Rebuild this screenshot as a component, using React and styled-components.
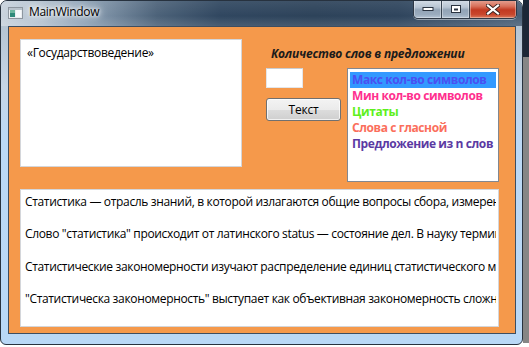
import React from "react";
import styled, { createGlobalStyle } from "styled-components";

const Global = createGlobalStyle`
  html, body { margin: 0; padding: 0; }
  body { background: #ffffff; font-family: "Open Sans", "Noto Sans", sans-serif; }
`;

const Desktop = styled.div`
  width: 529px;
  height: 347px;
  display: flex;
  align-items: flex-start;
  background:
    linear-gradient(to right, transparent 0 523px, #1c2737 523px) top / 100% 57px no-repeat,
    linear-gradient(to right, transparent 0 523px, #868686 523px) 0 57px / 100% 286px no-repeat,
    #ffffff;
`;

const Window = styled.div`
  box-sizing: border-box;
  width: 523px;
  height: 345px;
  border: 1px solid #27323f;
  border-radius: 7px 7px 6px 6px;
  overflow: hidden;
  display: flex;
  flex-direction: column;
  background: linear-gradient(
    to bottom,
    #aebdcb 0,
    #c6d6e6 25%,
    #bcd9f5 40%,
    #b9d8f6 100%
  );
`;

const TitleBar = styled.div`
  height: 25px;
  flex: none;
  display: flex;
  align-items: flex-start;
  padding: 0 5px 0 7px;
  background:
    linear-gradient(to bottom, rgba(255,255,255,0.08), rgba(255,255,255,0) 60%, rgba(255,255,255,0.12)),
    linear-gradient(
      to right,
      #c9d3dd 0,
      #b3c1cf 8%,
      #8ea2b6 16%,
      #4c6279 30%,
      #304760 42%,
      #2d435a 60%,
      #2f455d 76%,
      #4a6078 100%
    );
`;

const AppIcon = styled.svg`
  flex: none;
  margin-top: 6px;
`;

const Title = styled.div`
  margin-left: 6px;
  margin-top: 3px;
  font-family: "Open Sans", "Noto Sans", sans-serif;
  font-size: 12px;
  line-height: 16px;
  letter-spacing: -0.3px;
  color: #000;
  text-shadow: 0 0 6px #fff, 0 0 10px #fff, 0 0 3px #fff;
  flex: 1;
`;

const CaptionGroup = styled.div`
  display: flex;
  margin-top: -1px;
  height: 18px;
  border: 1px solid #2e3845;
  border-top: none;
  border-radius: 0 0 5px 5px;
  overflow: hidden;
  box-shadow: 0 1px 0 rgba(255,255,255,0.45);
`;

const CaptionButton = styled.div`
  width: ${(p) => p.$w}px;
  height: 100%;
  display: flex;
  align-items: center;
  justify-content: center;
  box-shadow: inset 0 0 0 1px rgba(255,255,255,0.35);
  border-left: ${(p) => (p.$first ? "none" : "1px solid #3a4654")};
  background: ${(p) =>
    p.$close
      ? "linear-gradient(to bottom, #e6a596 0, #d8705a 35%, #c23a22 55%, #c8462c 80%, #da7a5c 100%)"
      : "linear-gradient(to bottom, #d6dee8 0, #b8c5d3 40%, #93a4b7 55%, #9aabbd 80%, #b5c4d4 100%)"};
`;

const FrameBody = styled.div`
  flex: 1;
  display: flex;
  padding: 0 6px 10px 7px;
  min-height: 0;
  min-width: 0;
`;

const Client = styled.div`
  flex: 1;
  min-width: 0;
  overflow: hidden;
  border: 1px solid #3d4e61;
  background: #f5994b;
  display: flex;
  flex-direction: column;
  gap: 7px;
  padding: 12px 16px 6px 11px;
  font-family: "Open Sans", "Noto Sans", sans-serif;
`;

const TopArea = styled.div`
  display: flex;
  align-items: flex-start;
`;

const NoteBox = styled.div`
  box-sizing: border-box;
  width: 222px;
  height: 128px;
  background: #fff;
  border: 1px solid #d4d6da;
  padding: 5px 6px;
  font-size: 12px;
  line-height: 16px;
  letter-spacing: -0.3px;
  color: #000;
`;

const RightPanel = styled.div`
  margin-left: 24px;
  display: flex;
  flex-direction: column;
`;

const Caption = styled.div`
  height: 29px;
  padding-left: 5px;
  display: flex;
  align-items: center;
  font-size: 12px;
  font-weight: 700;
  font-style: italic;
  letter-spacing: -0.2px;
  color: #1b1b1b;
  white-space: nowrap;
`;

const ControlsRow = styled.div`
  display: flex;
  gap: 6px;
  align-items: flex-start;
`;

const ControlsColumn = styled.div`
  display: flex;
  flex-direction: column;
  align-items: flex-start;
  gap: 10px;
  width: 75px;
`;

const SmallInput = styled.div`
  box-sizing: border-box;
  width: 37px;
  height: 20px;
  background: #fff;
  border: 1px solid #e3e6ea;
  border-top-color: #c9cdd2;
`;

const Button = styled.div`
  box-sizing: border-box;
  width: 75px;
  height: 23px;
  border: 1px solid #707070;
  border-radius: 3px;
  background: linear-gradient(to bottom, #f3f3f3 0, #ebebeb 50%, #dddddd 50%, #cfcfcf 100%);
  box-shadow: inset 0 0 0 1px rgba(255,255,255,0.7);
  display: flex;
  align-items: center;
  justify-content: center;
  font-size: 12px;
  letter-spacing: -0.2px;
  color: #000;
`;

const ListBox = styled.div`
  box-sizing: border-box;
  width: 152px;
  height: 114px;
  background: #fff;
  border: 1px solid #828790;
  padding: 3px 2px;
  display: flex;
  flex-direction: column;
`;

const ListItem = styled.div`
  height: 16px;
  line-height: 16px;
  padding-left: 2px;
  font-size: 12px;
  font-weight: 700;
  letter-spacing: -0.4px;
  white-space: nowrap;
  overflow: hidden;
  color: ${(p) => p.$color};
  background: ${(p) => (p.$selected ? "#3399ff" : "transparent")};
`;

const TextArea = styled.div`
  box-sizing: border-box;
  height: 138px;
  min-width: 0;
  background: #fff;
  border: 1px solid #d4d6da;
  padding: 4px 0 4px 4px;
  overflow: hidden;
  font-size: 12px;
  line-height: 16.2px;
  letter-spacing: -0.34px;
  color: #000;
`;

const TextViewport = styled.div`
  margin-right: 2px;
  overflow: hidden;
`;

const Paragraph = styled.p`
  margin: 0 0 16.2px 0;
  white-space: nowrap;
`;

const items = [
  { text: "Макс кол-во символов", color: "#4a50f2", selected: true },
  { text: "Мин кол-во символов", color: "#ff2f8e" },
  { text: "Цитаты", color: "#5ef01c" },
  { text: "Слова с гласной", color: "#fb6f5c" },
  { text: "Предложение из n слов", color: "#5b3aa3" },
];

const paragraphs = [
  "Статистика — отрасль знаний, в которой излагаются общие вопросы сбора, измерения и анализа массовых статистических данных.",
  "Слово \"статистика\" происходит от латинского status — состояние дел. В науку термин \"статистика\" ввёл немецкий учёный Готфрид Ахенвалль.",
  "Статистические закономерности изучают распределение единиц статистического множества по отдельным признакам.",
  "\"Статистическа закономерность\" выступает как объективная закономерность сложного массового процесса.",
];

export default function App() {
  return (
    <>
      <Global />
      <Desktop>
        <Window>
          <TitleBar>
            <AppIcon width="15" height="12" viewBox="0 0 15 12">
              <rect x="0.5" y="0.5" width="14" height="11" fill="#e9edf1" stroke="#8d969f" />
              <rect x="1" y="1" width="13" height="2" fill="#b9c3cc" />
              <rect x="2" y="3" width="5" height="7" fill="#2f8a7a" />
              <rect x="2" y="3" width="5" height="3" fill="#6fb7a0" />
              <rect x="8" y="3" width="5" height="7" fill="#f7f9fb" />
            </AppIcon>
            <Title>MainWindow</Title>
            <CaptionGroup>
              <CaptionButton $w={27} $first>
                <svg width="12" height="6" viewBox="0 0 12 6">
                  <rect x="1" y="1.5" width="10" height="3" fill="#fff" stroke="#2a3340" strokeWidth="1" />
                </svg>
              </CaptionButton>
              <CaptionButton $w={27}>
                <svg width="12" height="10" viewBox="0 0 12 10">
                  <rect x="1" y="1" width="10" height="8" fill="#2a3340" />
                  <rect x="2" y="2" width="8" height="6" fill="#fff" />
                  <rect x="4" y="4.5" width="4" height="2" fill="#2a3340" />
                </svg>
              </CaptionButton>
              <CaptionButton $w={46} $close>
                <svg width="14" height="11" viewBox="0 0 14 11">
                  <path d="M2 1.5 L12 9.5 M12 1.5 L2 9.5" stroke="#3a2320" strokeWidth="4" strokeLinecap="square" />
                  <path d="M2 1.5 L12 9.5 M12 1.5 L2 9.5" stroke="#ffffff" strokeWidth="2.2" strokeLinecap="square" />
                </svg>
              </CaptionButton>
            </CaptionGroup>
          </TitleBar>
          <FrameBody>
            <Client>
              <TopArea>
                <NoteBox>«Государствоведение»</NoteBox>
                <RightPanel>
                  <Caption>Количество слов в предложении</Caption>
                  <ControlsRow>
                    <ControlsColumn>
                      <SmallInput />
                      <Button>Текст</Button>
                    </ControlsColumn>
                    <ListBox>
                      {items.map((it) => (
                        <ListItem key={it.text} $color={it.color} $selected={it.selected}>
                          {it.text}
                        </ListItem>
                      ))}
                    </ListBox>
                  </ControlsRow>
                </RightPanel>
              </TopArea>
              <TextArea>
                <TextViewport>
                  {paragraphs.map((p, i) => (
                    <Paragraph key={i}>{p}</Paragraph>
                  ))}
                </TextViewport>
              </TextArea>
            </Client>
          </FrameBody>
        </Window>
      </Desktop>
    </>
  );
}
